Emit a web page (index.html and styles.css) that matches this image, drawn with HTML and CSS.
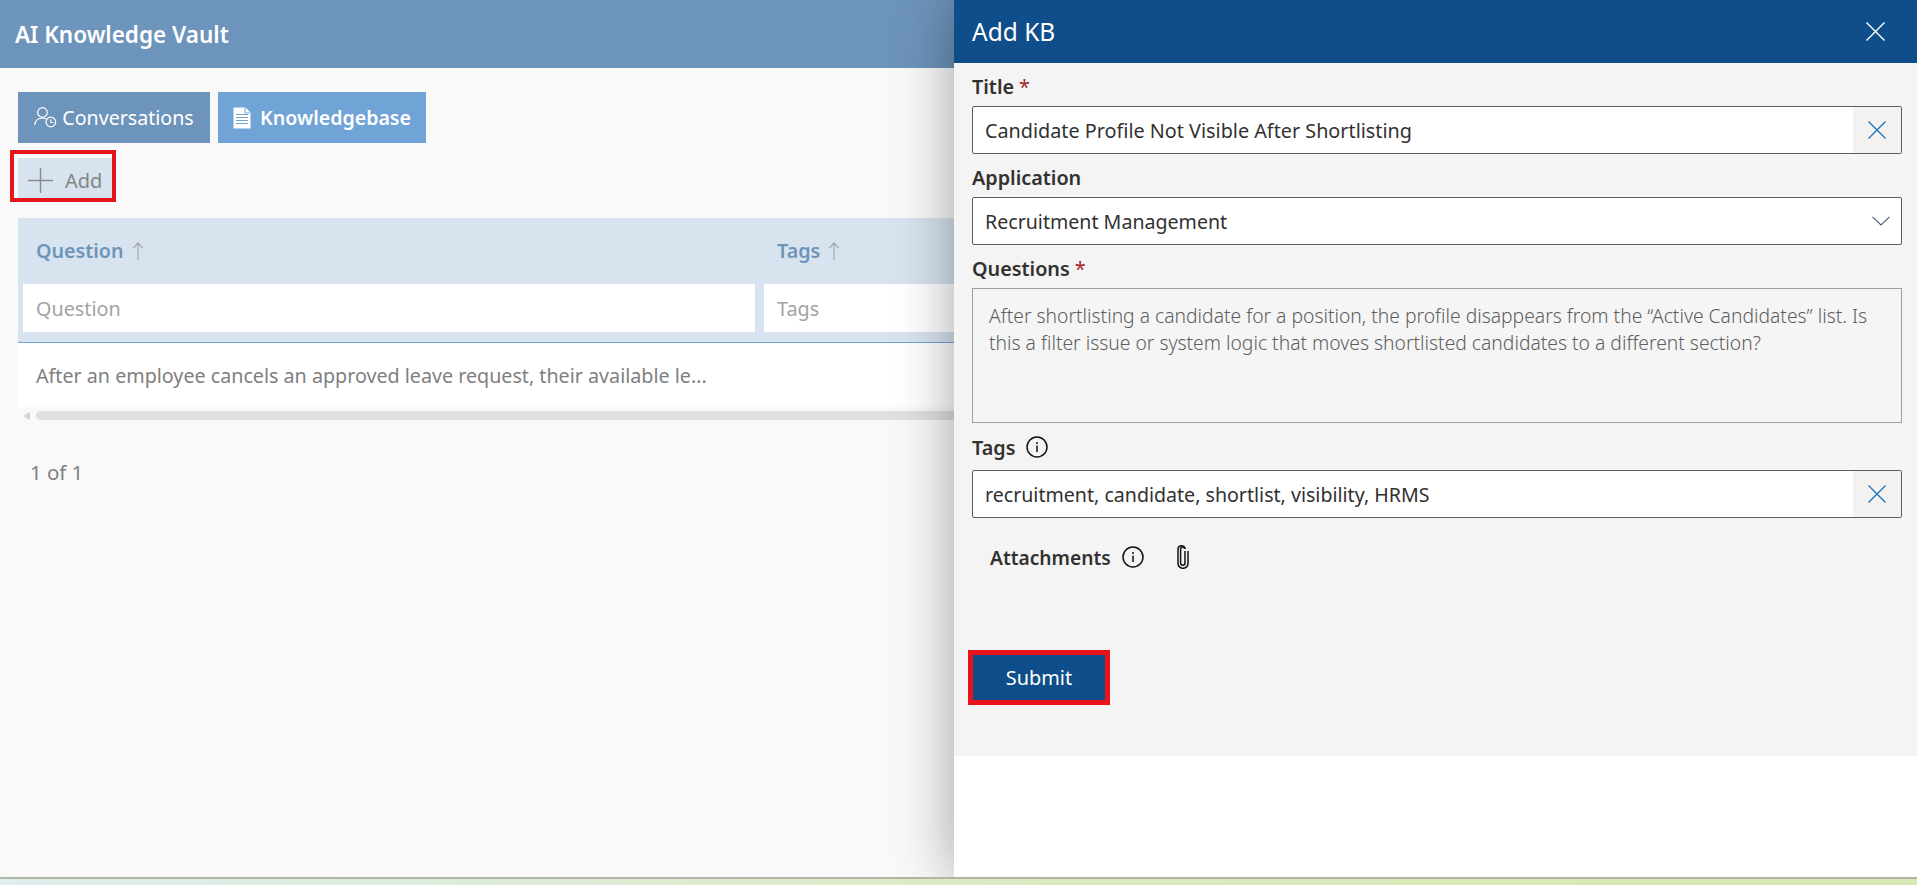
FILE: index.html
```html
<!DOCTYPE html>
<html lang="en">
<head>
    <meta charset="UTF-8">
    <title>AI Knowledge Vault</title>
    <link rel="stylesheet" href="styles.css">
</head>
<body>
    <div class="app">
        <header class="top-bar">AI Knowledge Vault</header>

        <main class="content">
            <nav class="tabs">
                <button class="tab tab-conversations">
                    <svg width="23" height="21" viewBox="0 0 23 21" fill="none" stroke="#fff" stroke-width="1.2">
                        <circle cx="8.500" cy="5.500" r="4.800"/>
                        <path d="M.7 18c.6-4.500 3.500-7 7.800-7 1.500 0 2.900.4 4 1"/>
                        <circle cx="16.800" cy="15" r="4.800"/>
                        <path d="M16.800 12.500v3h2.500"/>
                    </svg>
                    Conversations
                </button>
                <button class="tab tab-kb">
                    <svg width="18" height="22" viewBox="0 0 18 22">
                        <path d="M.5.500h12l5 5v16H.5z" fill="#fff"/>
                        <path d="M3 7.500h12M3 10.500h12M3 13.500h12M3 16.500h12" stroke="#6fa3d6" stroke-width="1"/>
                        <path d="M12 1v5h5" fill="none" stroke="#6fa3d6" stroke-width="1"/>
                    </svg>
                    Knowledgebase
                </button>
            </nav>

            <div class="add-wrap">
                <button class="add-btn">
                    <svg width="25" height="25" viewBox="0 0 25 25" stroke="#8a8a8a" stroke-width="1.4">
                        <path d="M0 12.500h25M12.500 0v25"/>
                    </svg>
                    Add
                </button>
            </div>

            <section class="grid">
                <div class="grid-head">
                    <div class="head-row">
                        <div class="col col-question">Question <svg class="sort" width="12" height="18" viewBox="0 0 12 18" fill="none" stroke="#a9a9a9" stroke-width="1.2"><path d="M6 18V1M1.500 6L6 1l4.500 5"/></svg></div>
                        <div class="col col-tags">Tags <svg class="sort" width="12" height="18" viewBox="0 0 12 18" fill="none" stroke="#a9a9a9" stroke-width="1.2"><path d="M6 18V1M1.500 6L6 1l4.500 5"/></svg></div>
                    </div>
                    <div class="filter-row">
                        <div class="filter filter-question">Question</div>
                        <div class="filter filter-tags">Tags</div>
                    </div>
                </div>
                <div class="grid-row">
                    <div class="cell">After an employee cancels an approved leave request, their available le...</div>
                </div>
                <div class="scrollbar">
                    <span class="scroll-arrow"></span>
                    <span class="scroll-thumb"></span>
                </div>
            </section>

            <p class="pager">1 of 1</p>
        </main>

        <aside class="panel">
            <div class="panel-head">
                <h2>Add KB</h2>
                <svg class="panel-close" width="19" height="19" viewBox="0 0 19 19" stroke="#fff" stroke-width="1.4"><path d="M.5.500l18 18M18.500.500l-18 18"/></svg>
            </div>
            <div class="panel-body">
                <label class="field-label">Title <span class="req">*</span></label>
                <div class="field">
                    <span class="field-text field-title">Candidate Profile Not Visible After Shortlisting</span>
                    <span class="clear"><svg width="18" height="18" viewBox="0 0 18 18" stroke="#1a73c0" stroke-width="1.3"><path d="M.5.500l17 17M17.500.500l-17 17"/></svg></span>
                </div>

                <label class="field-label">Application</label>
                <div class="field">
                    <span class="field-text">Recruitment Management</span>
                    <svg class="chevron" width="18" height="10" viewBox="0 0 18 10" fill="none" stroke="#45607c" stroke-width="1.1"><path d="M.5.800L9 9 17.500.800"/></svg>
                </div>

                <label class="field-label">Questions <span class="req">*</span></label>
                <div class="textarea">After shortlisting a candidate for a position, the profile disappears from the “Active Candidates” list. Is<br>this a filter issue or system logic that moves shortlisted candidates to a different section?</div>

                <label class="field-label label-info">Tags
                    <svg width="22" height="22" viewBox="0 0 22 22" fill="none" stroke="#111" stroke-width="1.500"><circle cx="11" cy="11" r="10"/><path d="M11 9.500v6.500M11 6v2"/></svg>
                </label>
                <div class="field">
                    <span class="field-text">recruitment, candidate, shortlist, visibility, HRMS</span>
                    <span class="clear"><svg width="18" height="18" viewBox="0 0 18 18" stroke="#1a73c0" stroke-width="1.3"><path d="M.5.500l17 17M17.500.500l-17 17"/></svg></span>
                </div>

                <div class="attachments">
                    <span class="attach-label">Attachments</span>
                    <svg width="22" height="22" viewBox="0 0 22 22" fill="none" stroke="#111" stroke-width="1.500"><circle cx="11" cy="11" r="10"/><path d="M11 9.500v6.500M11 6v2"/></svg>
                    <svg class="clip" width="12" height="24" viewBox="0 0 12 24" fill="none" stroke="#111" stroke-width="1.500"><path d="M8 6v12a2.200 2.200 0 0 1-4.400 0V4a2 2 0 0 1 4 0"/><path d="M11 6v12.500a5 4.800 0 0 1-10 0V4a3.500 3.300 0 0 1 7 0"/></svg>
                </div>

                <div class="submit-wrap">
                    <button class="submit">Submit</button>
                </div>
            </div>
        </aside>
    </div>
    <div class="desktop-strip"></div>
</body>
</html>
```

FILE: styles.css
```css
* {
    box-sizing: border-box;
}

html, body {
    height: 100%;
}

body {
    margin: 0;
    overflow: hidden;
    font-family: "Noto Sans", "Open Sans", sans-serif;
    background-color: #f9f9f9;
}

button {
    font-family: inherit;
    border: none;
}

.app {
    position: relative;
    height: 877px;
    overflow: hidden;
    background-color: #f9f9f9;
}

.top-bar {
    height: 68px;
    padding-left: 15px;
    display: flex;
    align-items: center;
    background-color: #6d94bb;
    color: white;
    font-size: 22.5px;
    font-weight: 600;
}

.content {
    padding: 24px 0 0 18px;
}

.tabs {
    display: flex;
    gap: 8px;
}

.tab {
    height: 51px;
    display: flex;
    align-items: center;
    justify-content: center;
    color: white;
    font-size: 19.6px;
}

.tab-conversations {
    width: 192px;
    gap: 5px;
    padding: 0;
    background-color: #6d94bb;
}

.tab-kb {
    width: 208px;
    gap: 9px;
    padding: 0;
    background-color: #70a3d6;
    font-weight: 600;
}

.add-wrap {
    width: fit-content;
    margin: 7px 0 16px -8px;
    padding: 4px 0 0 4px;
    border: 4px solid #e8141c;
}

.add-btn {
    width: 94px;
    height: 40px;
    padding: 4px 0 0 10px;
    display: flex;
    align-items: center;
    gap: 12px;
    background-color: #d7e3ef;
    color: #858585;
    font-size: 20px;
}

.grid {
    width: 1300px;
}

.grid-head {
    height: 125px;
    background-color: #d7e3ef;
    border-bottom: 1px solid #6fa3d6;
}

.head-row {
    height: 65px;
    display: flex;
}

.col {
    display: flex;
    align-items: center;
    gap: 8px;
    color: #6d94bb;
    font-size: 19.7px;
    font-weight: 600;
}

.col-question {
    width: 741px;
    padding-left: 18px;
}

.col-tags {
    padding-left: 18px;
}

.filter-row {
    display: flex;
    gap: 9px;
    padding: 1px 0 0 5px;
}

.filter {
    height: 48px;
    padding: 1px 0 0 13px;
    display: flex;
    align-items: center;
    background-color: white;
    color: #a3a3a3;
    font-size: 19.8px;
}

.filter-question {
    width: 732px;
}

.filter-tags {
    width: 400px;
}

.grid-row {
    height: 64px;
    padding: 1px 0 0 18px;
    display: flex;
    align-items: center;
    background-color: white;
    color: #808080;
    font-size: 19.7px;
}

.scrollbar {
    height: 13px;
    padding-top: 4px;
    display: flex;
    align-items: flex-start;
    background-color: #f9f9f9;
}

.scroll-arrow {
    width: 0;
    height: 0;
    margin: 1px 6px 0 5px;
    border-style: solid;
    border-width: 4px 7px 4px 0;
    border-color: transparent #d4d4d4 transparent transparent;
}

.scroll-thumb {
    flex: 1;
    height: 9px;
    border-radius: 5px;
    background-color: #e0e0e0;
}

.pager {
    margin: 38px 0 0 12px;
    color: #808080;
    font-size: 20.4px;
}

/* side panel lies over the page */
.panel {
    position: absolute;
    top: 0;
    right: 0;
    bottom: 0;
    width: 963px;
    background-color: white;
    box-shadow: 0 0 55px rgba(0, 0, 0, 0.36);
}

.panel-head {
    height: 63px;
    padding: 0 32px 0 18px;
    display: flex;
    align-items: center;
    justify-content: space-between;
    background-color: #0f4e8a;
    color: white;
}

.panel-head h2 {
    margin: 0;
    font-size: 24.500px;
    font-weight: 400;
}

.panel-body {
    height: 693px;
    padding: 0 15px 0 18px;
    background-color: #f4f4f4;
}

.field-label {
    height: 43px;
    padding-top: 3px;
    display: flex;
    align-items: center;
    gap: 5px;
    color: #323130;
    font-size: 19.8px;
    font-weight: 600;
}

.req {
    color: #a4262c;
    font-weight: 400;
}

.label-info {
    gap: 11px;
    height: 47px;
    padding-top: 1px;
}

.field {
    height: 48px;
    display: flex;
    align-items: center;
    justify-content: space-between;
    background-color: white;
    border: 1px solid #605e5c;
    border-radius: 2px;
}

.field-text {
    padding-left: 12px;
    color: #323130;
    font-size: 19.6px;
}

.field-title {
    font-size: 19.8px;
}

.clear {
    width: 48px;
    height: 46px;
    display: flex;
    align-items: center;
    justify-content: center;
    background-color: #f3f2f1;
}

.chevron {
    margin-right: 11px;
}

.textarea {
    height: 135px;
    padding: 13px 16px;
    border: 1px solid #a19f9d;
    background-color: #f5f5f5;
    color: #5e5e5e;
    font-size: 19.3px;
    font-weight: 300;
    line-height: 27px;
}

.attachments {
    height: 40px;
    margin-top: 19px;
    padding-left: 18px;
    display: flex;
    align-items: center;
    color: #323130;
    font-size: 19.2px;
    font-weight: 600;
}

.attach-label {
    margin-right: 11px;
}

.clip {
    margin-left: 33px;
}

.submit-wrap {
    width: fit-content;
    margin: 73px 0 0 -4px;
    border: 5px solid #e8141c;
}

.submit {
    display: block;
    width: 132px;
    height: 45px;
    background-color: #0f4e8a;
    color: white;
    font-size: 19.9px;
}

.desktop-strip {
    height: 8px;
    border-top: 2px solid #b0b5a5;
    background: linear-gradient(to right, #dfeeee, #dbe9bd 60%, #d8e8b4);
}
```
